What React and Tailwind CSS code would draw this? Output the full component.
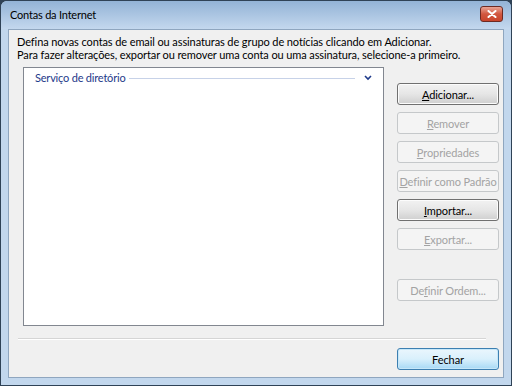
import React from "react";

function Btn({ children, disabled, def }) {
  let cls =
    "h-[22px] w-full rounded-[3px] border flex items-center justify-center text-[11px] tracking-[-0.1px] leading-none whitespace-nowrap ";
  if (def)
    cls +=
      "border-[#3c7fb1] bg-gradient-to-b from-[#eaf6fd] via-[#d9f0fc] to-[#a7d9f5] text-black shadow-[inset_0_0_0_1px_#c6e7f9]";
  else if (disabled)
    cls += "border-[#c5c8ca] bg-[#f4f4f4] text-[#a3a3a3]";
  else
    cls +=
      "border-[#707070] bg-gradient-to-b from-[#f2f2f2] via-[#e6e6e6] to-[#cfcfcf] text-black shadow-[inset_0_0_0_1px_#fcfcfc]";
  return <div className={cls}>{children}</div>;
}

export default function App() {
  return (
    <div
      className="w-[512px] h-[386px] bg-[#2f4256] p-[1px] overflow-hidden"
      style={{ fontFamily: 'Lato, "Noto Sans", sans-serif' }}
    >
      <div className="w-full h-full flex flex-col bg-[#c2d7ed] rounded-t-[6px] px-[7px] pb-[7px]">
        <div className="h-[28px] mx-[-7px] px-[7px] bg-gradient-to-b from-[#93b3d6] to-[#c4d8ee] rounded-t-[6px] flex items-center justify-between">
          <span className="pl-[2px] text-[11px] tracking-[-0.2px] text-black">Contas da Internet</span>
          <div className="w-[23px] h-[16px] mt-[-2px] mr-[1px] rounded-[3px] border border-[#6d2a22] bg-gradient-to-b from-[#e8a495] via-[#d1573f] to-[#c8442b] flex items-center justify-center">
            <svg width="10" height="8" viewBox="0 0 10 8">
              <path d="M1.5 1 L8.5 7 M8.5 1 L1.5 7" stroke="#fff" strokeWidth="2" strokeLinecap="round" />
            </svg>
          </div>
        </div>
        <div className="flex-1 bg-[#f0f0f0] border border-[#8fa6bf] flex flex-col pl-[8px] pr-[4px] pt-[5px]">
          <div className="text-[11px] tracking-[-0.1px] leading-[13px] text-black whitespace-nowrap">
            <div>Defina novas contas de email ou assinaturas de grupo de notícias clicando em Adicionar.</div>
            <div>Para fazer alterações, exportar ou remover uma conta ou uma assinatura, selecione-a primeiro.</div>
          </div>
          <div className="flex mt-[6px] gap-[13px]">
            <div className="w-[361px] h-[259px] ml-[6px] bg-white border border-[#828790] px-[11px] pt-[3px]">
              <div className="flex items-center h-[14px] gap-[4px]">
                <span className="text-[11px] tracking-[-0.2px] text-[#1e3a8a] whitespace-nowrap">Serviço de diretório</span>
                <div className="flex-1 h-[1px] bg-[#c7d2e8]" />
                <svg width="10" height="8" viewBox="0 0 10 8" className="ml-[4px] mr-[-1px]">
                  <path d="M2 2 L5 5 L8 2" stroke="#1e3a8a" strokeWidth="1.6" fill="none" />
                </svg>
              </div>
            </div>
            <div className="w-[102px] flex flex-col mt-[16px]">
              <div className="flex flex-col gap-[7px]">
                <Btn><span><u>A</u>dicionar...</span></Btn>
                <Btn disabled><span><u>R</u>emover</span></Btn>
                <Btn disabled><span><u>P</u>ropriedades</span></Btn>
                <Btn disabled><span><u>D</u>efinir como Padrão</span></Btn>
                <Btn><span><u>I</u>mportar...</span></Btn>
                <Btn disabled><span><u>E</u>xportar...</span></Btn>
              </div>
              <div className="mt-[29px]">
                <Btn disabled><span>De<u>f</u>inir Ordem...</span></Btn>
              </div>
            </div>
          </div>
          <div className="h-[1px] bg-[#d5d5d5] border-b border-white box-content mt-[12px] ml-[1px] mr-[13px]" />
          <div className="flex justify-end mt-[8px]">
            <div className="w-[102px]">
              <Btn def>Fechar</Btn>
            </div>
          </div>
        </div>
      </div>
    </div>
  );
}
